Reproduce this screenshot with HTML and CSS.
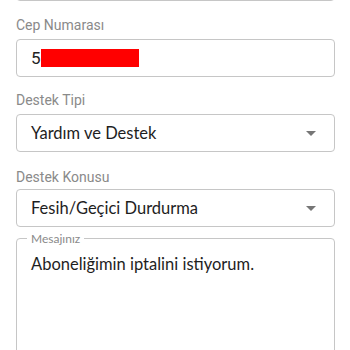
FILE: index.html
```html
<!DOCTYPE html>
<html>
<head>
<meta charset="utf-8">
<link rel="stylesheet" href="styles.css">
</head>
<body>
<div class="form">
  <div class="box cut"></div>
  <div class="label first">Cep Numarası</div>
  <div class="box input"><span class="num">5</span><span class="redact"></span></div>
  <div class="label">Destek Tipi</div>
  <div class="box select"><span class="val">Yardım ve Destek</span><span class="arrow"></span></div>
  <div class="label last">Destek Konusu</div>
  <div class="box select"><span class="val">Fesih/Geçici Durdurma</span><span class="arrow"></span></div>
  <fieldset class="msg">
    <legend>Mesajınız</legend>
    <div class="msgtext">Aboneliğimin iptalini istiyorum.</div>
  </fieldset>
</div>
</body>
</html>
```
FILE: styles.css
```css
html, body { margin: 0; padding: 0; background: #fff; overflow: hidden; }
body { width: 350px; height: 350px; }
.form { display: flex; flex-direction: column; padding: 0 15px 0 16px; }
.box { box-sizing: border-box; border: 1px solid #c6c6c6; border-radius: 4px; height: 38px; display: flex; align-items: center; flex-shrink: 0; }
.cut { margin-top: -37px; }
.label { font-family: Roboto, "Liberation Sans", sans-serif; font-size: 14px; line-height: 20px; color: #8a8a8a; margin-top: 13px; margin-bottom: 4px; }
.label.first { margin-top: 14px; }
.label.last { margin-top: 15px; margin-bottom: 2px; }
.input { padding-left: 14px; font-family: Roboto, "Liberation Sans", sans-serif; font-size: 17px; color: #222; }
.redact { display: inline-block; width: 98px; height: 18px; background: #ff0000; }
.select { padding: 0 18px 0 14px; justify-content: space-between; font-family: Lato, sans-serif; font-size: 16.5px; color: #1e1e1e; }
.arrow { width: 0; height: 0; border-left: 5px solid transparent; border-right: 5px solid transparent; border-top: 5px solid #767676; }
.msg { margin: 5px 0 0 0; padding: 9px 14px 0 14px; border: 1px solid #c6c6c6; border-radius: 4px; height: 140px; min-width: 0; flex-shrink: 0; }
.msg legend { font-family: Lato, sans-serif; font-size: 12px; line-height: 13px; color: #8a8a8a; padding: 0 4px; margin-left: -4px; }
.msgtext { font-family: Lato, sans-serif; font-size: 16.5px; color: #1e1e1e; }
```
